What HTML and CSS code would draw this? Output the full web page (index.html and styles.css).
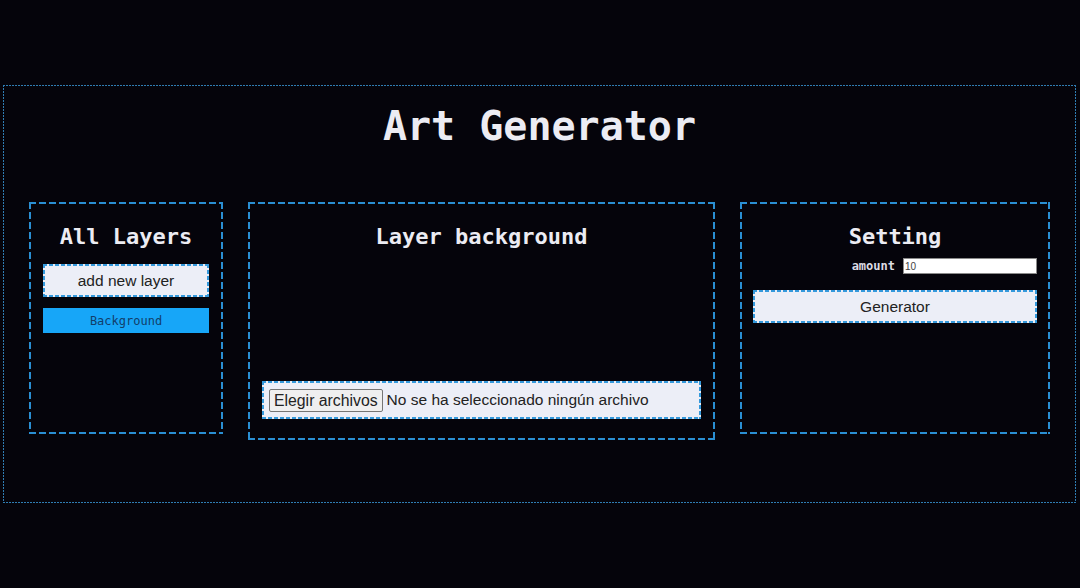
FILE: index.html
```html
<!DOCTYPE html>
<html lang="es">
<head>
<meta charset="utf-8">
<title>Art Generator</title>
<link rel="stylesheet" href="styles.css">
</head>
<body>
<div class="app">
  <h1 class="title">Art Generator</h1>
  <div class="panels">
    <section class="panel panel-layers">
      <h2 class="panel-title">All Layers</h2>
      <button class="btn dashed-sm">add new layer</button>
      <div class="layer-item">Background</div>
    </section>
    <section class="panel panel-editor">
      <h2 class="panel-title">Layer background</h2>
      <div class="file-box dashed-sm">
        <span class="file-btn">Elegir archivos</span>
        <span class="file-text">No se ha seleccionado ningún archivo</span>
      </div>
    </section>
    <section class="panel panel-settings">
      <h2 class="panel-title">Setting</h2>
      <div class="amount-row">
        <label class="amount-label" for="amount">amount</label>
        <input class="amount-input" id="amount" type="text" value="10">
      </div>
      <button class="btn dashed-sm btn-gen">Generator</button>
    </section>
  </div>
</div>
</body>
</html>
```

FILE: styles.css
```css
html, body {
  margin: 0;
  padding: 0;
  background: #05040b;
}
body {
  font-family: "DejaVu Sans Mono", "Liberation Mono", monospace;
  color: #ececf3;
}

/* dotted outer frame */
.app {
  --c: #2f7db3;
  margin: 85px 4px 0 3px;
  height: 418px;
  box-sizing: border-box;
  padding: 17px 1px 1px;
  background-image:
    linear-gradient(90deg, var(--c) 2px, transparent 0),
    linear-gradient(90deg, var(--c) 2px, transparent 0),
    linear-gradient(180deg, var(--c) 2px, transparent 0),
    linear-gradient(180deg, var(--c) 2px, transparent 0);
  background-size: 3px 1px, 3px 1px, 1px 3px, 1px 3px;
  background-position: left top, left bottom, left top, right top;
  background-repeat: repeat-x, repeat-x, repeat-y, repeat-y;
}
.title {
  margin: 0;
  text-align: center;
  font-size: 40px;
  line-height: 48px;
  font-weight: bold;
  color: #ececf3;
}
.panels {
  display: flex;
  align-items: flex-start;
  justify-content: space-between;
  padding: 0 25px;
  margin-top: 52px;
}

/* dashed panel frame */
.panel {
  --c: #2a8fd3;
  box-sizing: border-box;
  padding: 22px 14px 0;
  display: flex;
  flex-direction: column;
  background-image:
    linear-gradient(90deg, var(--c) 7px, transparent 0),
    linear-gradient(90deg, var(--c) 7px, transparent 0),
    linear-gradient(180deg, var(--c) 7px, transparent 0),
    linear-gradient(180deg, var(--c) 7px, transparent 0);
  background-size: 10px 2px, 10px 2px, 2px 10px, 2px 10px;
  background-position: left top, left bottom, left top, right top;
  background-repeat: repeat-x, repeat-x, repeat-y, repeat-y;
}
.panel-layers { width: 194px; height: 232px; }
.panel-editor { width: 467px; height: 238px; justify-content: space-between; padding-bottom: 21px; }
.panel-settings { width: 310px; height: 232px; padding-left: 13px; padding-right: 13px; }
.panel-title {
  margin: 0;
  font-size: 22px;
  line-height: 26px;
  font-weight: bold;
  text-align: center;
  color: #ececf3;
}

/* small dashed frame for light boxes */
.dashed-sm {
  --c: #3499dc;
  border: none;
  background-color: #eceef7;
  background-image:
    linear-gradient(90deg, var(--c) 4px, transparent 0),
    linear-gradient(90deg, var(--c) 4px, transparent 0),
    linear-gradient(180deg, var(--c) 4px, transparent 0),
    linear-gradient(180deg, var(--c) 4px, transparent 0);
  background-size: 6px 2px, 6px 2px, 2px 6px, 2px 6px;
  background-position: left top, left bottom, left top, right top;
  background-repeat: repeat-x, repeat-x, repeat-y, repeat-y;
}
.btn {
  font-family: "Liberation Sans", Arial, sans-serif;
  font-size: 15.5px;
  color: #222;
  height: 33px;
  padding: 0;
  cursor: pointer;
}
.panel-layers .btn {
  margin-top: 14px;
}
.layer-item {
  margin-top: 11px;
  height: 25px;
  background: #17a6f8;
  color: #123e6a;
  font-size: 12px;
  line-height: 26px;
  text-align: center;
}
.file-box {
  height: 38px;
  box-sizing: border-box;
  display: flex;
  align-items: center;
  padding: 0 7px;
  font-family: "Liberation Sans", Arial, sans-serif;
  font-size: 15.5px;
  color: #222;
}
.file-btn {
  background: #efefef;
  border: 1px solid #767676;
  border-radius: 2px;
  padding: 1px 4px;
  line-height: 19px;
  margin-right: 4px;
  font-size: 15.8px;
}
.amount-row {
  display: flex;
  justify-content: flex-end;
  align-items: center;
  margin-top: 8px;
  gap: 8px;
}
.amount-label {
  font-size: 12px;
  font-weight: bold;
  color: #dcdce4;
}
.amount-input {
  width: 134px;
  height: 16px;
  box-sizing: border-box;
  border: 1px solid #8a8a8a;
  background: #fff;
  font-family: "Liberation Sans", Arial, sans-serif;
  font-size: 10px;
  color: #444;
  padding: 0 1px;
  margin: 0;
}
.btn-gen {
  margin-top: 16px;
}
```
